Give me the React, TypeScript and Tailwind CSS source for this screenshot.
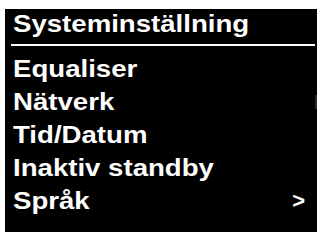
import React from 'react';

const items = ['Equaliser', 'Nätverk', 'Tid/Datum', 'Inaktiv standby', 'Språk'];

export default function App() {
  return (
    <div className="w-[321px] h-[235px] bg-white pt-[9px] pl-[5px] overflow-hidden">
      <div
        className="relative w-[312px] h-[223px] bg-black text-white font-bold"
        style={{ fontFamily: '"Liberation Sans", Arial, sans-serif' }}
      >
        {/* Title */}
        <div className="ml-[6px] mr-[2px] pt-[3px] pb-[5px] border-b-2 border-white">
          <span className="inline-block text-[24px] leading-[24px] ml-[2px] scale-x-[1.15] origin-left">
            Systeminställning
          </span>
        </div>

        {/* Menu */}
        <div className="flex flex-col pt-[6px] pl-[8px] pr-[12px]">
          {items.map((item, i) => (
            <div key={item} className="flex items-center justify-between h-[33px]">
              <span className="inline-block text-[24px] leading-[33px] scale-x-[1.15] origin-left">{item}</span>
              {i === items.length - 1 && (
                <span className="inline-block text-[22px] leading-[33px]">&gt;</span>
              )}
            </div>
          ))}
        </div>

        {/* scroll marker */}
        <div className="absolute right-0 top-[86px] w-[2px] h-[14px] bg-[#2a2a2a]" />
      </div>
    </div>
  );
}
